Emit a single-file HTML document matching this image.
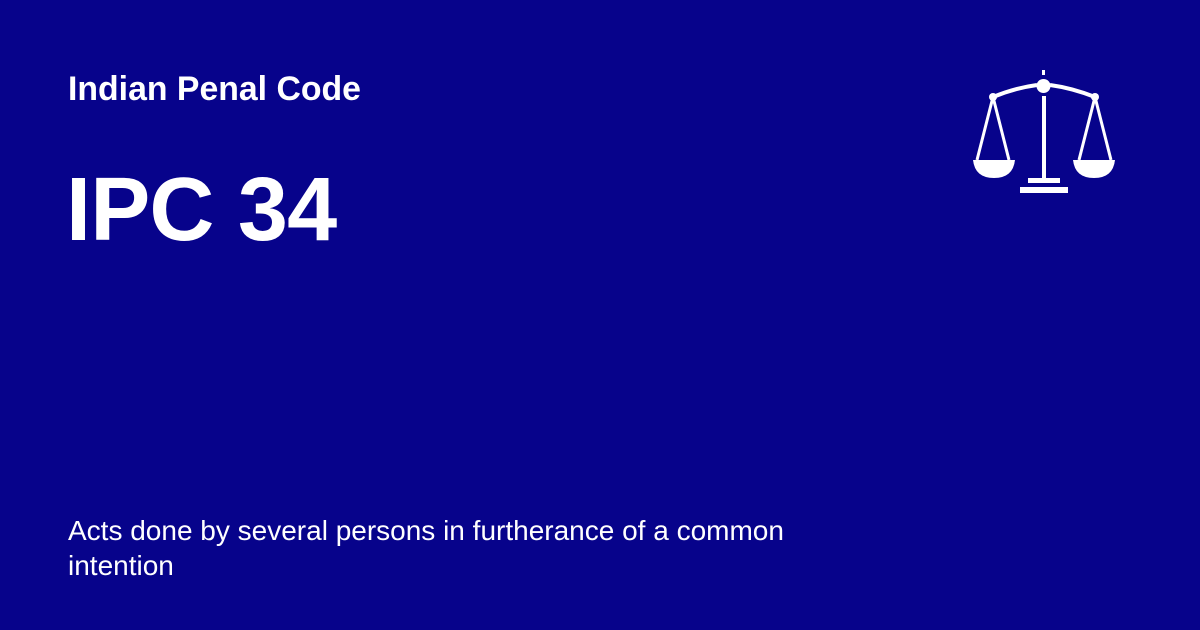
<!DOCTYPE html>
<html><head><style>
html,body{margin:0;padding:0}
body{width:1200px;height:630px;background:#07038b;position:relative;overflow:hidden;font-family:"Liberation Sans",Arial,sans-serif;color:#fff}
.a{position:absolute;left:68px;top:70px;font-size:33.8px;font-weight:bold}
.b{position:absolute;left:66px;top:159px;font-size:90px;font-weight:bold;letter-spacing:-0.8px}
.c{position:absolute;left:68px;top:513px;font-size:28px;line-height:35px;width:800px}
</style></head><body>
<div class="a">Indian Penal Code</div>
<div class="b">IPC 34</div>
<div class="c">Acts done by several persons in furtherance of a common<br>intention</div>
<svg width="1200" height="630" style="position:absolute;left:0;top:0">
<g fill="#fff" stroke="#fff">
<rect x="1042" y="70" width="3" height="5" stroke="none"/>
<circle cx="1043.5" cy="86" r="7" stroke="none"/>
<path d="M993 97 Q1015 88 1037 85 M1050 85 Q1072 88 1095 97" fill="none" stroke-width="4"/>
<circle cx="993" cy="97" r="4" stroke="none"/>
<circle cx="1095" cy="97" r="4" stroke="none"/>
<rect x="1042" y="96" width="4" height="82" stroke="none"/>
<path d="M993 97 L977 160 M993 97 L1009 160 M1095 97 L1079 160 M1095 97 L1111 160" fill="none" stroke-width="3"/>
<path d="M973 160 H1015 Q1013 178 994 178 Q975 178 973 160Z" stroke="none"/>
<path d="M1073 160 H1115 Q1113 178 1094 178 Q1075 178 1073 160Z" stroke="none"/>
<rect x="1028" y="178" width="32" height="5" stroke="none"/>
<rect x="1020" y="187" width="48" height="6" stroke="none"/>
</g></svg>
</body></html>
